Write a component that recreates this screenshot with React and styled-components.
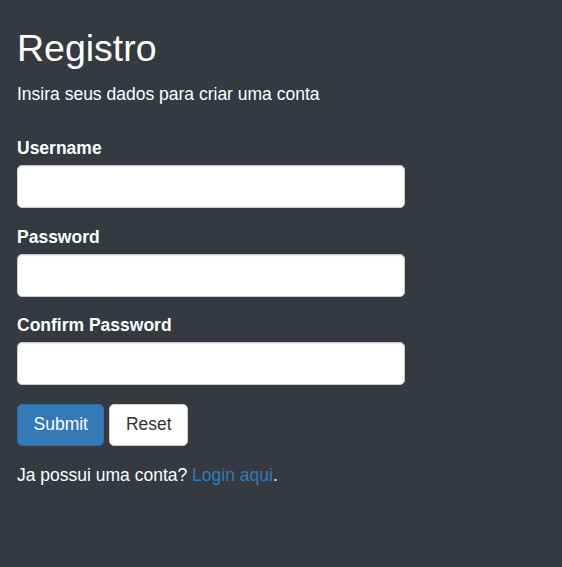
import React from 'react';
import styled, {createGlobalStyle} from 'styled-components';

const GlobalStyle = createGlobalStyle`
  html, body {
    margin: 0;
    padding: 0;
    background-color: #343a40;
    min-height: 100%;
  }
  body {
    font-family: "Liberation Sans", Arial, sans-serif;
    font-size: 17.5px;
    color: #ffffff;
  }
`;

const Page = styled.div`
  padding: 28px 17px 40px 17px;
  width: 388px;
`;

const Title = styled.h2`
  font-size: 37.5px;
  font-weight: 500;
  line-height: 41px;
  margin: 0 0 13px 0;
`;

const Subtitle = styled.p`
  margin: 0 0 31px 0;
  line-height: 25px;
`;

const FormGroup = styled.div`
  display: flex;
  flex-direction: column;
  margin-bottom: 18.5px;
`;

const Label = styled.label`
  font-weight: bold;
  line-height: 21px;
  margin-bottom: 6px;
`;

const Input = styled.input`
  box-sizing: border-box;
  height: 43px;
  width: 100%;
  padding: 8px 15px;
  font-family: inherit;
  font-size: 17.5px;
  color: #555;
  background: #fff;
  border: 1px solid #ccc;
  border-radius: 5px;
  box-shadow: inset 0 1px 1px rgba(0, 0, 0, 0.075);
  outline: none;
`;

const Buttons = styled.div`
  display: flex;
  gap: 5px;
  margin-bottom: 17px;
`;

const Button = styled.button`
  box-sizing: border-box;
  height: 42px;
  padding: 0 15.5px;
  font-family: inherit;
  font-size: 17.5px;
  border-radius: 5px;
  border: 1px solid ${props => props.primary ? '#2e6da4' : '#ccc'};
  background: ${props => props.primary ? '#337ab7' : '#ffffff'};
  color: ${props => props.primary ? '#ffffff' : '#333333'};
  cursor: pointer;
`;

const Footer = styled.p`
  margin: 0;
  line-height: 25px;
`;

const Link = styled.a`
  color: #337ab7;
  text-decoration: none;
`;

export default function App() {
  return (
    <>
      <GlobalStyle/>
      <Page>
        <Title>Registro</Title>
        <Subtitle>Insira seus dados para criar uma conta</Subtitle>
        <FormGroup>
          <Label>Username</Label>
          <Input type="text"/>
        </FormGroup>
        <FormGroup>
          <Label>Password</Label>
          <Input type="password"/>
        </FormGroup>
        <FormGroup>
          <Label>Confirm Password</Label>
          <Input type="password"/>
        </FormGroup>
        <Buttons>
          <Button primary>Submit</Button>
          <Button type="reset">Reset</Button>
        </Buttons>
        <Footer>Ja possui uma conta? <Link href="#">Login aqui</Link>.</Footer>
      </Page>
    </>
  );
}
